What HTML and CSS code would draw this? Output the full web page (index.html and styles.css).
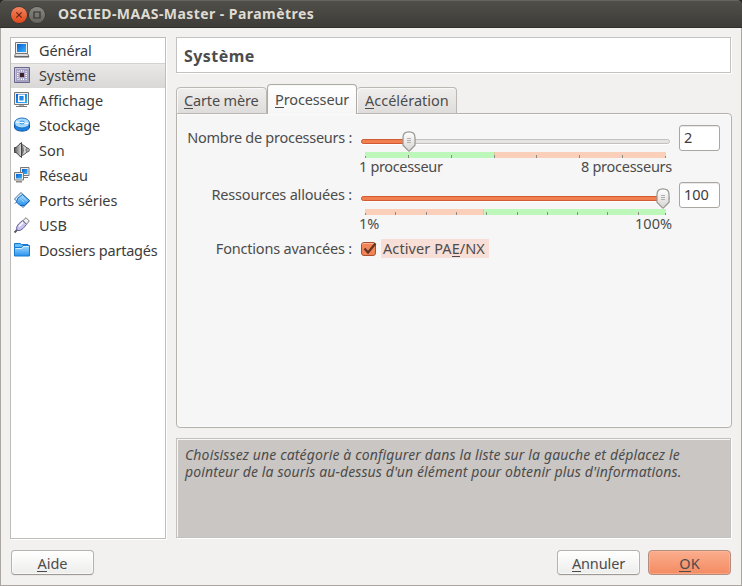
FILE: index.html
```html
<!DOCTYPE html>
<html lang="fr">
<head>
<meta charset="utf-8">
<title>OSCIED-MAAS-Master - Paramètres</title>
<link rel="stylesheet" href="styles.css">
</head>
<body>
<svg width="0" height="0" class="defs">
  <defs>
    <linearGradient id="blue" x1="0" y1="0" x2="1" y2="1"><stop offset="0" stop-color="#0a5fd0"/><stop offset="1" stop-color="#35b4ff"/></linearGradient>
    <linearGradient id="sky" x1="0" y1="0" x2="0" y2="1"><stop offset="0" stop-color="#a8dcff"/><stop offset="1" stop-color="#2792ee"/></linearGradient>
    <linearGradient id="knob" x1="0" y1="0" x2="0" y2="1"><stop offset="0" stop-color="#fff"/><stop offset="1" stop-color="#d6d5d3"/></linearGradient>
    <linearGradient id="grey" x1="0" y1="0" x2="1" y2="0"><stop offset="0" stop-color="#555"/><stop offset="1" stop-color="#e2e2e2"/></linearGradient>
    <symbol id="handle" viewBox="0 0 14 21">
      <path d="M1 6.5Q1 .8 7 .8T13 6.5V14.2L7.7 19.7Q7 20.4 6.3 19.7L1 14.2Z" fill="url(#knob)" stroke="#989590" stroke-width="1.2"/>
      <path d="M5 7.5h4M5 9.5h4M5 11.5h4" stroke="#b1aeab"/>
    </symbol>
  </defs>
</svg>
<div class="window">
  <header class="titlebar">
    <span class="wm close"><svg viewBox="0 0 16 16"><path d="M5.3 5.3l5.4 5.4M10.7 5.3l-5.4 5.4" stroke="#692510" stroke-width="1.2"/></svg></span>
    <span class="wm max"><svg viewBox="0 0 16 16"><path d="M5 5h6v6H5z" fill="none" stroke="#34332f" stroke-width="1.2"/></svg></span>
    <h1>OSCIED-MAAS-Master - Paramètres</h1>
  </header>
  <div class="client">
    <main class="columns">
      <ul class="categories">
        <li><svg viewBox="0 0 16 16"><path d="M1.500.5h12v11h-12z" fill="#eee" stroke="#777"/><path d="M3 2h9v8H3z" fill="url(#blue)"/><path d="M1.500 11.500h12l1.500 3H.5z" fill="#ddd" stroke="#777"/><path d="M.5 15h14.500" stroke="#555"/></svg><span class="c1">Général</span></li>
        <li class="selected"><svg viewBox="0 0 16 16"><path d="M.5.5h15v15H.5z" fill="#a5a2c2" stroke="#69678b"/><path d="M1.500 14.500v-13h13" fill="none" stroke="#c9c7db"/><path d="M6 6h4v4H6z" fill="#40202a"/><path d="M3.500 4.500h1M5.500 3.500v1M7.500 3v1.500M9.500 3.500v1M11.500 4.500h1M3 6.500h1.500M3 8.500h1.500M3 10.500h1.500M11.500 6.500H13M11.500 8.500H13M11.500 10.500H13M5.500 11.500v1M7.500 11.500v1.500M9.500 11.500v1.500M11.500 12.500h1M3.500 12.500h1" stroke="#fff"/></svg><span class="c2">Système</span></li>
        <li><svg viewBox="0 0 16 16"><path d="M.5.5h14v12H.5z" fill="#eee" stroke="#777"/><path d="M2 2h11v9H2z" fill="url(#blue)"/><path d="M4.700 3.200h5.600v6H4.700z" fill="none" stroke="#fff" stroke-width="1.400"/><path d="M5 13h5v1.500H5z" fill="#aaa"/><path d="M2 14.500h11" stroke="#777"/></svg><span class="c3">Affichage</span></li>
        <li><svg viewBox="0 0 16 16"><path d="M.5 6v4c0 5.500 15 5.500 15 0V6" fill="#1a83e7" stroke="#17549b"/><ellipse cx="8" cy="6" rx="7.500" ry="5" fill="#a8daff" stroke="#2774bf"/><ellipse cx="8" cy="5.500" rx="2.500" ry="1.400" fill="#fff" stroke="#238be0"/><path d="M2 5l4 .3M10 6l4 .5" stroke="#fff"/></svg><span class="c4">Stockage</span></li>
        <li><svg viewBox="0 0 16 16"><path d="M6 1.500Q10 3 14.500 7v2Q10 13 6 14.500z" fill="#d5d5d5" stroke="#555"/><path d="M.5 5.500H2L7.500.5v15L2 10.500H.5z" fill="url(#grey)" stroke="#444"/><path d="M8 2.500q4 5.500 0 11" fill="#777"/><circle cx="13.700" cy="8" r="1.800" fill="#aaa" stroke="#555" stroke-width=".7"/></svg><span class="c5">Son</span></li>
        <li><svg viewBox="0 0 16 16"><path d="M6.500.5h8.500v8H6.500z" fill="#eee" stroke="#777"/><path d="M8 2h5.500v5H8z" fill="url(#blue)"/><path d="M9 10.500h5" stroke="#777"/><path d="M.5 5.500h9v7.500h-9z" fill="#eee" stroke="#777"/><path d="M2 7h6v4.500H2z" fill="url(#blue)"/><path d="M2 14.800h6" stroke="#777" stroke-width="1.300"/></svg><span class="c6">Réseau</span></li>
        <li><svg viewBox="0 0 16 16"><path d="M7 .5L.5 7 9 15.500 15.500 9z" fill="#d1eaff" stroke="#426d9b"/><path d="M8.500 2.500l7 6-5 5H6L2.500 10 1 11.500M8.500 2.500L4 6l-1.500 4" fill="url(#sky)" stroke="#1766b5"/><path d="M6.500 6.500l4 4M9 5.500l3.500 3.500" stroke="#cdeaff" stroke-dasharray="1 1"/></svg><span class="c7">Ports séries</span></li>
        <li><svg viewBox="0 0 16 16"><path d="M.5 15.500l3-3" stroke="#555" stroke-width="1.800"/><path d="M3 13.500Q1.500 10 4.500 7L8.500 3.500l4 4L9 11.500q-3 3-6 2z" fill="#c6c3ed" stroke="#6661a0"/><path d="M9 3.500L12 .7 15.300 4l-2.800 3.200z" fill="#f1f1f5" stroke="#777"/><path d="M5 9.500l4-4" stroke="#fff" stroke-width="1.400"/></svg><span class="c8">USB</span></li>
        <li><svg viewBox="0 0 16 16"><path d="M.5 13V1.500H6l1.500 1H14V5" fill="#65bdfb" stroke="#1979ce"/><path d="M.5 14V5.500h7l1.500-2h6.500V14z" fill="url(#sky)" stroke="#187bcf"/><path d="M1.500 6.500h6.500l1.500-2h5" fill="none" stroke="#d5efff"/></svg><span class="c9">Dossiers partagés</span></li>
      </ul>
      <section class="page">
        <h2><span>Système</span></h2>
        <div class="notebook">
          <nav class="tabs">
            <a class="tab"><span class="t1"><u>C</u>arte mère</span></a>
            <a class="tab active"><span class="t2"><u>P</u>rocesseur</span></a>
            <a class="tab"><span class="t3"><u>A</u>ccélération</span></a>
          </nav>
          <div class="pane">
            <div class="row">
              <label class="l1">Nombre de processeurs :</label>
              <div class="slider">
                <div class="groove"><div class="fill two"></div></div>
                <svg class="handle at-two"><use href="#handle"/></svg>
                <svg class="scale" viewBox="0 0 301 6"><path d="M0 0h130v6H0z" fill="#bdf8ba"/><path d="M129 0h172v6H129z" fill="#fbd0bb"/><path d="M129.500 0v3" stroke="#d9cf9a"/><path d="M.5 4v2M43.500 3v3M86.500 3v3M129.500 3v3M171.500 3v3M214.500 3v3M257.500 3v3M300.500 4v2" stroke="#8c8c86"/></svg>
                <div class="ends"><span class="e1">1 processeur</span><span class="e2">8 processeurs</span></div>
              </div>
              <div class="field">2</div>
            </div>
            <div class="row">
              <label class="l2">Ressources allouées :</label>
              <div class="slider">
                <div class="groove"><div class="fill full"></div></div>
                <svg class="handle at-full"><use href="#handle"/></svg>
                <svg class="scale" viewBox="0 0 301 6"><path d="M0 0h119v6H0z" fill="#fbd0bb"/><path d="M119 0h182v6H119z" fill="#bdf8ba"/><path d="M118.500 0v6" stroke="#d9cf9a"/><path d="M.5 4v2M30.500 3v3M61.500 3v3M91.500 3v3M121.500 3v3M152.500 3v3M182.500 3v3M212.500 3v3M242.500 3v3M273.500 3v3M300.500 4v2" stroke="#8c8c86"/></svg>
                <div class="ends"><span class="e3">1%</span><span class="e4">100%</span></div>
              </div>
              <div class="field">100</div>
            </div>
            <div class="row check">
              <label class="l3">Fonctions avancées :</label>
              <svg class="box" viewBox="0 0 17 17"><rect x=".5" y="1.500" width="14" height="13" rx="2.500" fill="#f18556" stroke="#a8502e"/><path d="M1.500 3.500q0-1 1-1h10" fill="none" stroke="#f9b497"/><path d="M3.500 7.500l3.500 4L14.500 2.500" fill="none" stroke="#633326" stroke-width="2.200"/></svg>
              <span class="hover"><span class="l4">Activer PA<u>E</u>/NX</span></span>
            </div>
          </div>
        </div>
        <p class="help"><span class="h1">Choisissez une catégorie à configurer dans la liste sur la gauche et déplacez le</span><br><span class="h2">pointeur de la souris au-dessus d'un élément pour obtenir plus d'informations.</span></p>
      </section>
    </main>
    <footer>
      <button><span class="b1"><u>A</u>ide</span></button>
      <button class="push"><span class="b2"><u>A</u>nnuler</span></button>
      <button class="default"><span class="b3"><u>O</u>K</span></button>
    </footer>
  </div>
</div>
</body>
</html>
```
FILE: styles.css
```css
* { box-sizing: border-box; }
body { margin: 0; width: 742px; height: 586px; overflow: hidden; background: #282723; font: 14.5px/20px "Noto Sans", sans-serif; color: #4c4c4c; }
.defs { display: block; width: 0; height: 0; }
svg { display: block; flex: none; overflow: visible; }
span, label, h1 { white-space: nowrap; }
u { text-decoration: none; background: linear-gradient(#4c4c4c, #4c4c4c) 0 18px / 100% 1px no-repeat; }
.window { height: 586px; display: flex; flex-direction: column; }
.titlebar { height: 28px; flex: none; display: flex; align-items: center; padding: 0 0 0 11px; background: linear-gradient(#504f49, #3d3c38); border-top: 1px solid #66655e; border-bottom: 1px solid #302f2c; border-radius: 5px 5px 0 0; }
.titlebar h1 { margin: 0 0 0 13px; font-size: 14px; line-height: 20px; font-weight: 700; color: #dfdbd2; letter-spacing: .44px; }
.wm { width: 16px; height: 16px; border-radius: 50%; flex: none; margin-top: 2px; }
.wm svg { width: 16px; height: 16px; }
.close { background: linear-gradient(#f4845e, #e0491b); box-shadow: 0 0 0 .5px #2f2c28; }
.max { margin-left: 2px; background: linear-gradient(#898780, #65645e); box-shadow: 0 0 0 .5px #2f2c28; }
.client { flex: 1; display: flex; flex-direction: column; background: #f2f1f0; border: 1px solid #aaa7a2; border-top: 0; padding: 9px 10px 10px 9px; }
.columns { display: flex; gap: 10px; height: 502px; }
.categories { list-style: none; margin: 0; padding: 0; width: 156px; height: 502px; flex: none; border: 1px solid #bfbdba; background: #fff; box-shadow: 1px 1px #fff; color: #3c3c3c; }
.categories li { height: 25px; display: flex; align-items: flex-start; padding: 4px 0 0 3px; gap: 9px; }
.categories svg { width: 16px; height: 16px; }
.categories span { margin-top: -2px; }
.categories .selected { background: linear-gradient(#eae9e8, #dad8d6); box-shadow: inset 0 1px #d5d3d0; }
.c1, .c2, .c4, .c6, .c7 { letter-spacing: -.1px; }
.c9 { letter-spacing: -.23px; }
.page { width: 556px; flex: none; display: flex; flex-direction: column; }
h2 { margin: 0 0 11px; width: 555px; height: 36px; background: #fff; border: 1px solid #c3c2c0; box-shadow: 1px 1px #fff; padding: 8px 7px; font-size: 16px; line-height: 20px; font-weight: 700; letter-spacing: .45px; }
.notebook { height: 344px; display: flex; flex-direction: column; }
.tabs { display: flex; align-items: flex-end; height: 30px; margin-bottom: -1px; z-index: 1; }
.tab { height: 27px; width: 91px; border: 1px solid #bbb8b4; border-radius: 4px 4px 0 0; background: linear-gradient(#efeeed, #dfdddb); box-shadow: inset 1px 1px #f8f8f7; padding: 2px 0 0 7px; }
.tab.active { width: 90px; height: 30px; border-color: #aeaba7; border-bottom: 0; background: linear-gradient(#fff, #f6f6f6); padding-top: 4px; }
.tab:last-child { width: 100px; border-left: 0; padding-left: 8px; }
.t1 { letter-spacing: -.16px; }
.t2 { letter-spacing: -.12px; }
.pane { height: 315px; border: 1px solid #b5b2ae; border-radius: 0 4px 4px 4px; background: #f6f6f6; box-shadow: inset 0 0 0 1px #fbfbfb; padding: 11px 10px; }
.row { height: 57px; display: flex; }
.row label { width: 165px; padding-top: 2px; display: flex; justify-content: flex-end; }
.l1 { letter-spacing: -.27px; }
.l2, .l3 { letter-spacing: -.2px; }
.l4 { letter-spacing: .08px; }
.slider { width: 309px; margin-left: 9px; position: relative; }
.groove { height: 5px; margin-top: 14px; border: 1px solid #c3c1be; border-radius: 3px; background: #e5e4e2; box-shadow: 0 1px #fff; }
.fill { height: 5px; margin: -1px; border: 1px solid #d25c32; border-radius: 3px; background: #f27f50; }
.fill.two { width: 46px; }
.fill.full { width: 300px; }
.handle { width: 14px; height: 21px; position: absolute; top: 6px; }
.at-two { left: 41px; }
.at-full { left: 295px; }
.scale { width: 301px; height: 6px; margin: 8px 0 0 4px; }
.ends { display: flex; justify-content: space-between; margin: -2px -2px 0; }
.e1 { letter-spacing: -.34px; }
.e2 { letter-spacing: -.27px; }
.field { width: 41px; height: 26px; margin-left: 9px; border: 1px solid #aaa7a2; border-radius: 3px; background: #fff; box-shadow: inset 0 1px #e9e8e7; padding: 2px 4px; color: #3c3c3c; letter-spacing: -.1px; line-height: 19px; }
.check { height: 20px; }
.check label { padding-top: 0; margin-top: -1px; }
.box { width: 17px; height: 17px; margin: 2px 0 0 9px; }
.hover { height: 19px; width: 108px; margin-left: 3px; background: #f7ded6; padding-left: 2px; }
.hover > span { display: block; margin-top: -1px; }
.help { margin: 10px 0 0; width: 555px; height: 100px; flex: none; border: 1px solid #c3c1be; box-shadow: 1px 1px #fff, inset 1px 1px #f7f6f5; background: #cac6c3; padding: 7px 8px; font-style: italic; font-size: 14px; line-height: 17px; }
.h1 { letter-spacing: .14px; }
.h2 { letter-spacing: .12px; }
footer { display: flex; margin: 11px 0 0 1px; }
button { width: 83px; height: 25px; padding: 0; font: inherit; color: #4c4c4c; border: 1px solid #b5b3b0; border-bottom-color: #9d9a96; border-radius: 4px; background: linear-gradient(#fff, #ededec); box-shadow: inset 0 0 0 1px rgba(255,255,255,.6), 0 1px #e8e7e5; line-height: 20px; }
.push { margin-left: auto; }
.b2 { letter-spacing: -.12px; }
.default { margin-left: 8px; background: linear-gradient(#fbad8d, #f38b62); border-color: #b48d7e; box-shadow: inset 0 0 0 1px rgba(255,190,160,.5); }
```
